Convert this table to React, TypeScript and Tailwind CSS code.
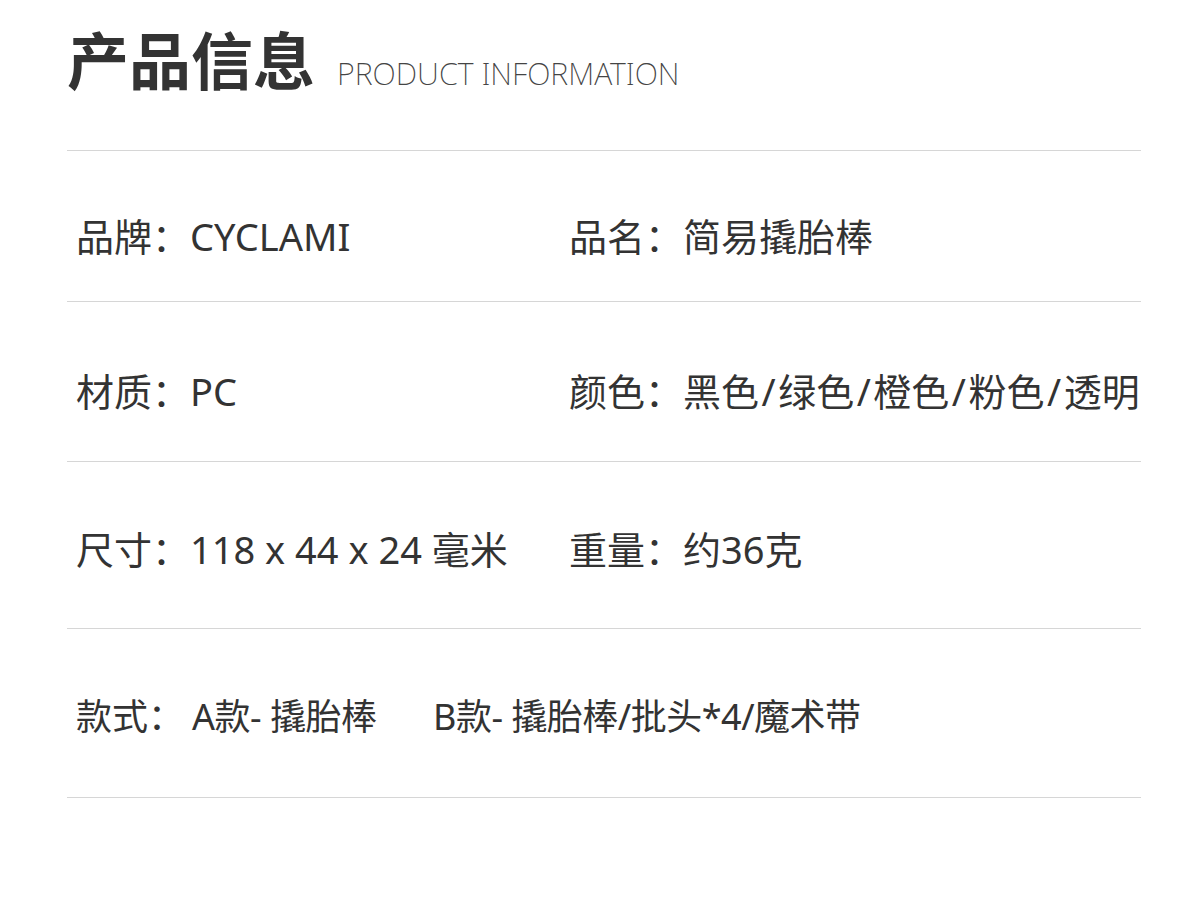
import React from 'react';

const cjk = "font-['Noto_Sans','Noto_Sans_CJK_SC',sans-serif]";

const Cell: React.FC<{ label: string; value: React.ReactNode; className?: string }> = ({ label, value, className }) => (
  <div className={`flex whitespace-nowrap ${className ?? ''}`}>
    <span>{label}：</span>
    <span>{value}</span>
  </div>
);

const Divider = () => <div className="h-px w-full bg-[#d6d6d6]" />;

const colors = ['黑色', '绿色', '橙色', '粉色', '透明'];

export default function App() {
  return (
    <div className={`w-[1200px] h-[906px] bg-white text-[#333333] ${cjk}`}>
      <div className="pl-[67px] pr-[59px] pt-[30px]">
        <div className="flex items-baseline h-[120px]">
          <h1 className="text-[62px] leading-none font-bold">产品信息</h1>
          <span className="ml-[22px] text-[30.5px] font-extralight text-[#444] leading-none">PRODUCT INFORMATION</span>
        </div>
        <Divider />

        <div className="h-[150px] pt-[66px] pl-[9px] text-[38px] leading-[38px] flex">
          <Cell label="品牌" value="CYCLAMI" className="w-[493px]" />
          <Cell label="品名" value="简易撬胎棒" />
        </div>
        <Divider />

        <div className="h-[159px] pt-[70px] pl-[9px] text-[38px] leading-[38px] flex">
          <Cell label="材质" value="PC" className="w-[493px]" />
          <Cell
            label="颜色"
            value={colors.map((c, i) => (
              <React.Fragment key={c}>
                {i > 0 && <span className="mx-[2.5px]">/</span>}
                {c}
              </React.Fragment>
            ))}
          />
        </div>
        <Divider />

        <div className="h-[166px] pt-[68px] pl-[9px] text-[38px] leading-[38px] flex">
          <Cell label="尺寸" value="118 x 44 x 24 毫米" className="w-[493px]" />
          <Cell label="重量" value="约36克" />
        </div>
        <Divider />

        <div className="h-[168px] pt-[69px] pl-[9px] text-[36px] leading-[38px] flex whitespace-nowrap">
          <span>款式：</span>
          <span className="ml-[8px] w-[241px] tracking-[-0.5px]">A款- 撬胎棒</span>
          <span className="tracking-[-0.5px]">B款- 撬胎棒/批头*4/魔术带</span>
        </div>
        <Divider />
      </div>
    </div>
  );
}
